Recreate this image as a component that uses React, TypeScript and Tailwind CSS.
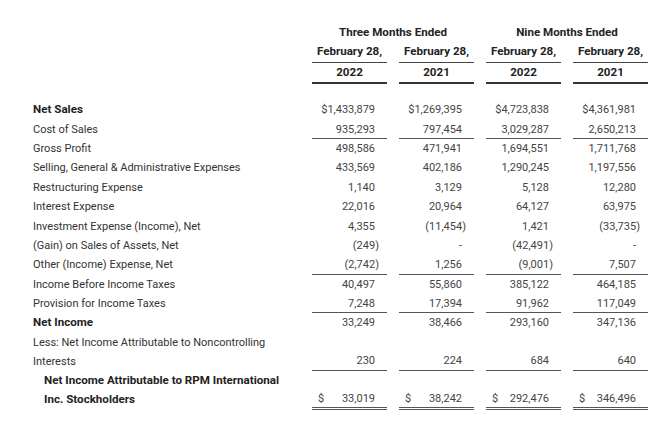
import React from 'react'

type Row = {
  label: string
  values: string[]
  bold?: boolean
  rule?: boolean
}

const rows: Row[] = [
  { label: 'Net Sales', values: ['$1,433,879', '$1,269,395', '$4,723,838', '$4,361,981'], bold: true },
  { label: 'Cost of Sales', values: ['935,293', '797,454', '3,029,287', '2,650,213'], rule: true },
  { label: 'Gross Profit', values: ['498,586', '471,941', '1,694,551', '1,711,768'] },
  { label: 'Selling, General & Administrative Expenses', values: ['433,569', '402,186', '1,290,245', '1,197,556'] },
  { label: 'Restructuring Expense', values: ['1,140', '3,129', '5,128', '12,280'] },
  { label: 'Interest Expense', values: ['22,016', '20,964', '64,127', '63,975'] },
  { label: 'Investment Expense (Income), Net', values: ['4,355', '(11,454)', '1,421', '(33,735)'] },
  { label: '(Gain) on Sales of Assets, Net', values: ['(249)', '-', '(42,491)', '-'] },
  { label: 'Other (Income) Expense, Net', values: ['(2,742)', '1,256', '(9,001)', '7,507'], rule: true },
  { label: 'Income Before Income Taxes', values: ['40,497', '55,860', '385,122', '464,185'] },
  { label: 'Provision for Income Taxes', values: ['7,248', '17,394', '91,962', '117,049'], rule: true },
  { label: 'Net Income', values: ['33,249', '38,466', '293,160', '347,136'], bold: true },
]

const grid = 'grid grid-cols-[267px_75px_75px_75px_75px] gap-x-[12px] pl-[33px]'

const Amount = ({ value }: { value: string }) => {
  if (value.startsWith('(')) {
    return (
      <>
        {value.slice(0, -1)}
        <span className="-mr-[4px]">)</span>
      </>
    )
  }
  return <>{value}</>
}

const IncomeStatement = () => {
  return (
    <div
      className="w-[670px] h-[421px] bg-white text-[11px] text-[#333] pt-[23px]"
      style={{ fontFamily: 'Roboto, "Liberation Sans", sans-serif' }}
    >
      {/* header */}
      <div className={grid}>
        <div />
        <div className="col-span-2 h-[19.4px] leading-[19.4px] text-center font-bold text-[11.6px] text-[#222]">Three Months Ended</div>
        <div className="col-span-2 h-[19.4px] leading-[19.4px] text-center font-bold text-[11.6px] text-[#222]">Nine Months Ended</div>
      </div>
      <div className={grid}>
        <div />
        {['2022', '2021', '2022', '2021'].map((_, i) => (
          <div key={i} className="h-[20.5px] leading-[19px] text-center font-bold text-[11.6px] text-[#222] border-b border-[#444]">
            February 28,
          </div>
        ))}
      </div>
      <div className={grid}>
        <div />
        {['2022', '2021', '2022', '2021'].map((y, i) => (
          <div key={i} className="h-[21.5px] leading-[19px] text-center font-bold text-[11.6px] text-[#222] border-b-2 border-[#333]">
            {y}
          </div>
        ))}
      </div>

      <div className="mt-[16px]">
        {rows.map((r) => (
          <div key={r.label} className={grid}>
            <div className={`h-[19.36px] leading-[19.36px] whitespace-nowrap ${r.bold ? 'font-bold text-[11.6px] text-[#222]' : ''}`}>
              {r.label}
            </div>
            {r.values.map((v, i) => (
              <div
                key={i}
                className={`h-[19.36px] leading-[19px] text-right pr-[12px] text-[#444] ${r.rule ? 'border-b border-[#555]' : ''}`}
              >
                <Amount value={v} />
              </div>
            ))}
          </div>
        ))}

        <div className={grid}>
          <div className="leading-[19.36px]">Less: Net Income Attributable to Noncontrolling Interests</div>
          {['230', '224', '684', '640'].map((v, i) => (
            <div key={i} className="flex items-end justify-end pr-[12px] text-[#444] border-b border-[#555]">
              <span className="h-[19.5px] leading-[19px]">{v}</span>
            </div>
          ))}
        </div>

        <div className={grid}>
          <div className="leading-[18.5px] pl-[11px] pr-[12px] pb-[2px] font-bold text-[11.6px] text-[#222]">
            Net Income Attributable to RPM International Inc. Stockholders
          </div>
          {['33,019', '38,242', '292,476', '346,496'].map((v, i) => (
            <div
              key={i}
              className="flex items-end justify-between pl-[6px] pr-[12px] text-[#444] border-b-[3px] border-double border-[#555]"
            >
              <span className="h-[17px] leading-[17px]">$</span>
              <span className="h-[17px] leading-[17px]">{v}</span>
            </div>
          ))}
        </div>
      </div>
    </div>
  )
}

export default function App() {
  return <IncomeStatement />
}
